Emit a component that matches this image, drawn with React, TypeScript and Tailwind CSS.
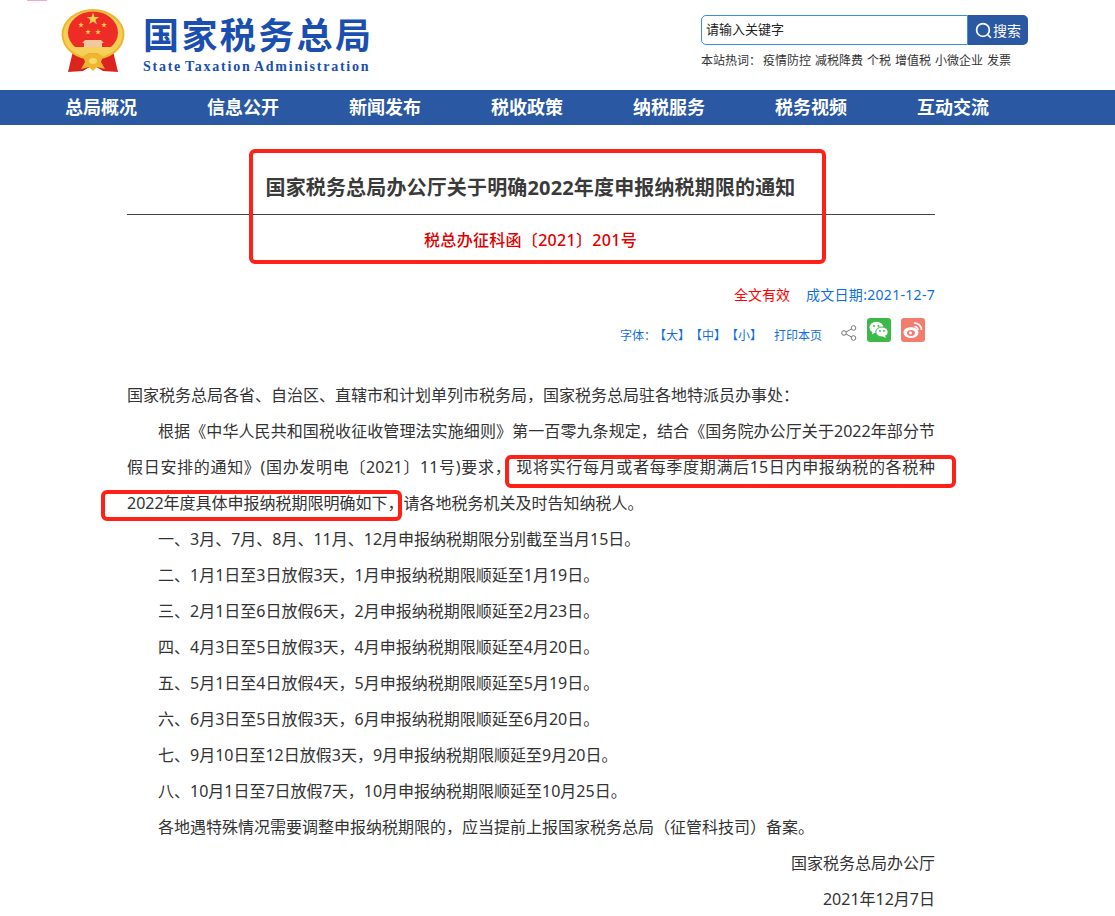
const navItems = ["总局概况", "信息公开", "新闻发布", "税收政策", "纳税服务", "税务视频", "互动交流"]
const hotWords = ["疫情防控", "减税降费", "个税", "增值税", "小微企业", "发票"]

const lines = [
  "一、3月、7月、8月、11月、12月申报纳税期限分别截至当月15日。",
  "二、1月1日至3日放假3天，1月申报纳税期限顺延至1月19日。",
  "三、2月1日至6日放假6天，2月申报纳税期限顺延至2月23日。",
  "四、4月3日至5日放假3天，4月申报纳税期限顺延至4月20日。",
  "五、5月1日至4日放假4天，5月申报纳税期限顺延至5月19日。",
  "六、6月3日至5日放假3天，6月申报纳税期限顺延至6月20日。",
  "七、9月10日至12日放假3天，9月申报纳税期限顺延至9月20日。",
  "八、10月1日至7日放假7天，10月申报纳税期限顺延至10月25日。",
  "各地遇特殊情况需要调整申报纳税期限的，应当提前上报国家税务总局（征管科技司）备案。",
]

function Star({ x, y, r }: { x: number; y: number; r: number }) {
  const pts = Array.from({ length: 10 }, (_, i) => {
    const a = -Math.PI / 2 + (i * Math.PI) / 5
    const d = i % 2 === 0 ? r : r * 0.4
    return `${x + d * Math.cos(a)},${y + d * Math.sin(a)}`
  }).join(" ")
  return <polygon points={pts} fill="#f2cf4e" />
}

function Emblem() {
  return (
    <svg width="66" height="64" viewBox="0 0 66 64" className="shrink-0">
      {/* ribbons */}
      <path d="M12 42 L7 63 L22 62 L32 56 L42 62 L57 63 L52 42 Z" fill="#dc241f" />
      {/* ring */}
      <ellipse cx="32" cy="25.5" rx="31.5" ry="25.5" fill="#eeb52f" />
      <ellipse cx="32" cy="25.5" rx="29.5" ry="23.5" fill="#f5cf55" />
      <ellipse cx="32" cy="23.5" rx="25" ry="21" fill="#ee2b24" />
      <Star x={32} y={10} r={6.5} />
      <Star x={20} y={16} r={3} />
      <Star x={43} y={16} r={3} />
      <Star x={27} y={23} r={3} />
      <Star x={37} y={23} r={3} />
      {/* gate */}
      <path d="M24 31 L40 31 L43 34 L41 34 L41 38 L23 38 L23 34 L21 34 Z" fill="#f3c8a0" />
      <path d="M13 38 L51 38 L49 44 L15 44 Z" fill="#f5d05a" />
      {/* knot */}
      <path d="M22 47 Q32 41 42 47 L40 53 L44 60 L36 58 L32 62 L28 58 L20 60 L24 53 Z" fill="#eeb52f" />
      <ellipse cx="32" cy="52" rx="4" ry="3" fill="#f8d96a" />
    </svg>
  )
}

function WeChat() {
  return (
    <div className="w-6 h-6 rounded-[3px] bg-[#3cb949] flex items-center justify-center">
      <svg width="20" height="18" viewBox="0 0 20 18">
        <ellipse cx="7.5" cy="6.5" rx="7" ry="5.7" fill="#fff" />
        <path d="M3.5 10 L3 13.5 L7 11 Z" fill="#fff" />
        <ellipse cx="13" cy="11" rx="6.2" ry="5" fill="#fff" stroke="#3cb949" />
        <path d="M16 14.5 L17 17 L13.5 15.5 Z" fill="#fff" />
        <circle cx="5" cy="5" r="1" fill="#3cb949" />
        <circle cx="9.5" cy="5" r="1" fill="#3cb949" />
        <circle cx="11" cy="10" r="0.9" fill="#3cb949" />
        <circle cx="15" cy="10" r="0.9" fill="#3cb949" />
      </svg>
    </div>
  )
}

function Weibo() {
  return (
    <div className="w-6 h-6 rounded-[3px] bg-[#f47c6e] flex items-center justify-center">
      <svg width="20" height="18" viewBox="0 0 20 18">
        <ellipse cx="8" cy="11.5" rx="7.5" ry="5.5" fill="#fff" />
        <ellipse cx="8" cy="12" rx="4" ry="3" fill="#f47c6e" />
        <circle cx="7.5" cy="12" r="1.4" fill="#fff" />
        <path d="M11 2 A7 7 0 0 1 18.5 9" fill="none" stroke="#fff" strokeWidth="1.7" />
        <path d="M11.5 5.5 A3.5 3.5 0 0 1 15 9" fill="none" stroke="#fff" strokeWidth="1.5" />
      </svg>
    </div>
  )
}

export default function App() {
  return (
    <div className="relative w-[1115px] h-[916px] overflow-hidden bg-white text-[#333] font-['Noto_Sans','Noto_Sans_CJK_SC',sans-serif]">
      {/* scrap of the page above, left in the capture */}
      <div className="absolute left-[27px] top-0 w-[20px] h-px bg-[#f3a6d8]" />

      {/* header */}
      <div className="h-[90px] flex pl-[61px]">
        <div className="pt-[9px]">
          <Emblem />
        </div>
        <div className="ml-4 pt-[13px] w-[232px]">
          <div className="text-[#1a4fb0] text-[36px] leading-[46px] font-bold tracking-[2.4px] whitespace-nowrap">国家税务总局</div>
          <div className="text-[#1a4fb0] text-[14px] leading-[14px] mt-[1px] font-bold tracking-[1.75px] [word-spacing:-2px] whitespace-nowrap font-['Liberation_Serif',serif]">
            State Taxation Administration
          </div>
        </div>
        <div className="ml-[326px] pt-[15px] w-[327px]">
          <div className="flex h-[30px]">
            <div className="w-[267px] border border-[#3b8fd8] rounded-l-[5px] pl-[4px] text-[13px] leading-[26px] text-[#222]">请输入关键字</div>
            <div className="w-[60px] bg-[#2a58a2] rounded-r-[5px] flex items-center justify-center gap-[1px] text-white text-[14px]">
              <svg width="17" height="17" viewBox="0 0 16 16" fill="none" stroke="#fff" strokeWidth="1.6">
                <circle cx="7.5" cy="7.5" r="6" />
                <path d="M12 12 L15 15" />
              </svg>
              搜索
            </div>
          </div>
          <div className="mt-[7px] text-[12px] leading-[17px] text-[#333] flex whitespace-nowrap">
            <span className="mr-[2px] w-[60px]">本站热词：</span>
            <div className="flex gap-[4px]">
              {hotWords.map((w) => (
                <span key={w}>{w}</span>
              ))}
            </div>
          </div>
        </div>
      </div>

      {/* nav */}
      <div className="h-[35px] bg-[#2a58a2] flex pl-[65px]">
        {navItems.map((n) => (
          <div key={n} className="w-[142px] text-white text-[18px] leading-[35px] font-bold">
            {n}
          </div>
        ))}
      </div>

      {/* article */}
      <div className="w-[808px] ml-[127px]">
        <div className="h-[90px] border-b border-[#444] text-center text-[20px] leading-[125px] font-bold text-[#3a3a3a] tracking-[0.15px] whitespace-nowrap pr-[1px]">
          国家税务总局办公厅关于明确2022年度申报纳税期限的通知
        </div>
        <div className="text-center text-[#e00000] text-[16px] leading-[24px] font-medium tracking-[0.3px] mt-[13px] pr-[1px]">税总办征科函〔2021〕201号</div>

        <div className="mt-[33px] flex justify-end text-[14px] leading-[20px] gap-4">
          <span className="text-[#ff0000]">全文有效</span>
          <span className="text-[#0f6fe0] tracking-[0.3px]">成文日期:2021-12-7</span>
        </div>

        <div className="mt-[11px] h-[28px] flex justify-end items-center text-[12px] text-[#0f6fe0] pr-[10px] whitespace-nowrap">
          <span className="mt-[12px]">字体：</span>
          <span className="mt-[12px] -ml-[2px] flex">
            <span>【大】</span>
            <span>【中】</span>
            <span>【小】</span>
          </span>
          <span className="mt-[12px] ml-[12px]">打印本页</span>
          <svg width="16" height="16" viewBox="0 0 16 16" fill="none" stroke="#777" strokeWidth="1" className="ml-[19px] mt-[6px]">
            <circle cx="3" cy="8" r="2.3" />
            <circle cx="12.5" cy="3" r="2.3" />
            <circle cx="12.5" cy="13" r="2.3" />
            <path d="M5 7 L10.5 4 M5 9 L10.5 12" />
          </svg>
          <div className="ml-[10px]">
            <WeChat />
          </div>
          <div className="ml-[10px]">
            <Weibo />
          </div>
        </div>

        <div className="mt-[33px] text-[16px] leading-[36px] text-[#333]">
          <p>国家税务总局各省、自治区、直辖市和计划单列市税务局，国家税务总局驻各地特派员办事处：</p>
          <p className="indent-[31px] [text-align-last:justify]">根据《中华人民共和国税收征收管理法实施细则》第一百零九条规定，结合《国务院办公厅关于2022年部分节</p>
          <p className="[text-align-last:justify]">假日安排的通知》(国办发明电〔2021〕11号)要求，&nbsp;现将实行每月或者每季度期满后15日内申报纳税的各税种</p>
          <p>2022年度具体申报纳税期限明确如下，请各地税务机关及时告知纳税人。</p>
          {lines.map((l) => (
            <p key={l} className="indent-[31px]">
              {l}
            </p>
          ))}
          <p className="text-right">国家税务总局办公厅</p>
          <p className="text-right">2021年12月7日</p>
        </div>
      </div>

      {/* red annotation boxes */}
      <div className="absolute left-[249px] top-[149px] w-[577px] h-[115px] border-[4px] border-[#ff2018] rounded-[6px]" />
      <div className="absolute left-[505px] top-[455px] w-[451px] h-[33px] border-[4px] border-[#ff2018] rounded-[6px]" />
      <div className="absolute left-[101px] top-[490px] w-[301px] h-[31px] border-[4px] border-[#ff2018] rounded-[6px]" />
    </div>
  )
}
